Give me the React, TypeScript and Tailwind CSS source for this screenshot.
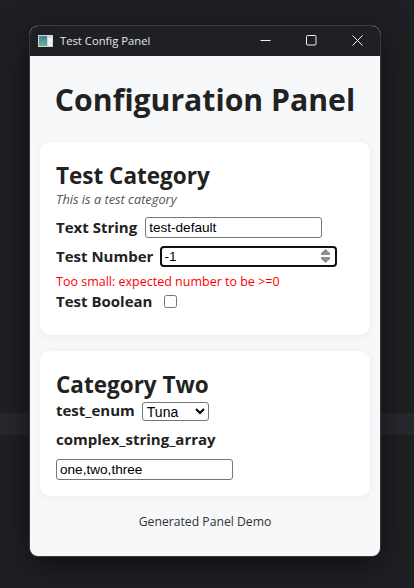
import { useEffect, useRef } from "react"

const labelCls = "font-bold text-[15px] leading-[18px] pb-[2px] text-[#222]"
const inputCls = "border border-[#767676] rounded-[3px] bg-white px-[3px] text-black text-[13.6px] h-[21px] font-['Liberation_Sans',sans-serif]"

function TitleBar() {
    return (
        <div className="flex items-center h-[30px] bg-[#1f2023] rounded-t-[8px] pl-[8px] text-[#e6e6e6]">
            <svg width="15" height="12" viewBox="0 0 15 12" className="shrink-0 -mt-[1px]">
                <defs>
                    <linearGradient id="tile" x1="0" y1="0" x2="0" y2="1">
                        <stop offset="0" stopColor="#3f7f9a" />
                        <stop offset="1" stopColor="#6db58f" />
                    </linearGradient>
                </defs>
                <rect width="15" height="12" fill="#d4d6d7" />
                <rect x="1" y="1" width="8" height="10" fill="url(#tile)" />
                <rect x="10" y="3" width="4" height="8" fill="#eef0ef" />
            </svg>
            <span className="ml-[7px] text-[11.25px]">Test Config Panel</span>
            <div className="ml-auto flex items-center pb-[1px]">
                <button className="w-[46px] h-[29px] flex items-center justify-center">
                    <svg width="11" height="11" viewBox="0 0 11 11"><path d="M0.5 5.5H10.5" stroke="#f0f0f0" /></svg>
                </button>
                <button className="w-[46px] h-[29px] flex items-center justify-center">
                    <svg width="11" height="11" viewBox="0 0 11 11"><rect x="0.5" y="0.5" width="9.5" height="9.5" rx="1" fill="none" stroke="#f0f0f0" /></svg>
                </button>
                <button className="w-[46px] h-[29px] flex items-center justify-center">
                    <svg width="11" height="11" viewBox="0 0 11 11"><path d="M0.5 0.5L10.5 10.5M10.5 0.5L0.5 10.5" stroke="#f0f0f0" /></svg>
                </button>
            </div>
        </div>
    )
}

export default function App() {
    const numberRef = useRef<HTMLInputElement>(null)
    useEffect(() => { numberRef.current?.focus() }, [])

    return (
        <div className="relative w-[414px] h-[588px] overflow-hidden bg-[#1e2023] pt-[26px] pl-[30px] font-['Open_Sans',sans-serif]">
            {/* faixa clara do fundo */}
            <div className="absolute left-0 right-0 top-[413px] h-[22px] bg-[#26282c]" />
            <div className="relative w-[350px] h-[530px] rounded-[8px] bg-[#f7f8fa] shadow-[0_0_0_1px_#3a3b3e,0_8px_32px_rgba(0,0,0,0.6)]">
                <TitleBar />
                <div className="px-[10px]">
                    <h1 className="pt-[22px] text-center font-bold text-[30.2px] leading-[44px] text-[#222]">Configuration Panel</h1>

                    {/* primeira categoria */}
                    <section className="mt-[20px] h-[193px] rounded-[10px] bg-white px-[16px] pt-[18px] shadow-[0_2px_8px_rgba(0,0,0,0.05)]">
                        <h2 className="font-bold text-[22.5px] leading-[32px] text-[#222]">Test Category</h2>
                        <p className="-mt-[1px] italic text-[12.8px] leading-[16px] text-[#555]">This is a test category</p>
                        <div className="mt-[10px] flex items-center gap-[8px]">
                            <label className={labelCls}>Text String</label>
                            <input className={`${inputCls} w-[177px]`} defaultValue="test-default" />
                        </div>
                        <div className="mt-[8px] flex items-center gap-[7px]">
                            <label className={labelCls}>Test Number</label>
                            <div className="relative">
                                <input ref={numberRef} type="number" className={`${inputCls} block w-[177px] [appearance:textfield] [&::-webkit-inner-spin-button]:appearance-none`} defaultValue={-1} />
                                {/* setinhas do campo numerico */}
                                <svg width="9" height="14" viewBox="0 0 9 14" className="absolute right-[7px] top-[3px]">
                                    <path d="M4.5 0L9 4V6H0V4Z" fill="#8f8f8f" />
                                    <path d="M0 8H9V10L4.5 14L0 10Z" fill="#8f8f8f" />
                                </svg>
                            </div>
                        </div>
                        <p className="mt-[7px] text-[12.5px] leading-[16px] text-[#ff0000]">Too small: expected number to be &gt;=0</p>
                        <div className="mt-[1px] flex items-center gap-[12px] h-[21px]">
                            <label className={labelCls}>Test Boolean</label>
                            <input type="checkbox" className="w-[13px] h-[13px]" />
                        </div>
                    </section>

                    {/* segunda categoria */}
                    <section className="mt-[16px] h-[145px] rounded-[10px] bg-white px-[16px] pt-[18px] shadow-[0_2px_8px_rgba(0,0,0,0.05)]">
                        <h2 className="font-bold text-[22.5px] leading-[32px] text-[#222]">Category Two</h2>
                        <div className="flex items-center gap-[7px]">
                            <label className={labelCls}>test_enum</label>
                            <select className="border border-[#767676] rounded-[3px] bg-white text-black text-[14px] h-[19px] w-[67px] font-['Liberation_Sans',sans-serif]" defaultValue="Tuna">
                                <option>Tuna</option>
                            </select>
                        </div>
                        <label className={`${labelCls} block mt-[9px]`}>complex_string_array</label>
                        <input className={`${inputCls} w-[177px] block mt-[9px]`} defaultValue="one,two,three" />
                    </section>

                    <p className="mt-[17px] text-center text-[12.2px] text-[#333]">Generated Panel Demo</p>
                </div>
            </div>
        </div>
    )
}
